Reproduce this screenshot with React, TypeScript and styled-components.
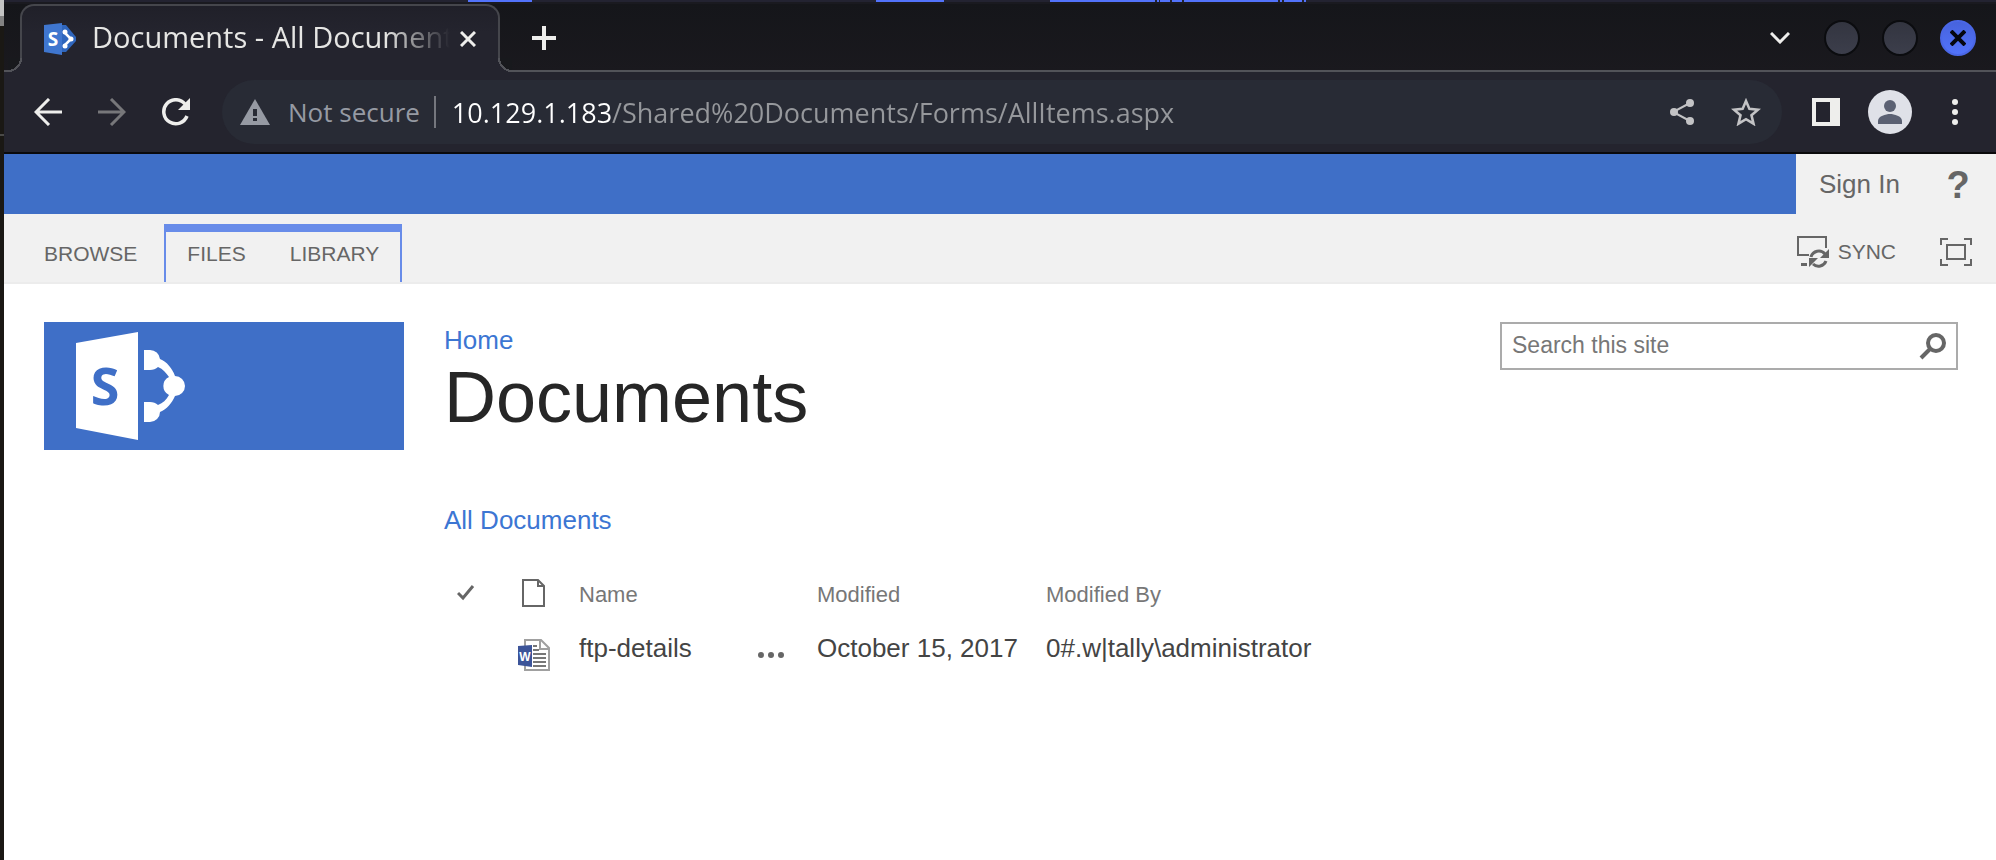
import React from 'react';
import styled, { createGlobalStyle, css } from 'styled-components';

const ui = '"Open Sans", "Noto Sans", sans-serif';
const body = '"Liberation Sans", Arial, sans-serif';

const c = {
  desktop: '#1a1814',
  strip: '#18191d',
  toolbar: '#24242e',
  field: '#282b35',
  line: '#525359',
  tabLine: '#45464c',
  icon: '#eeeeec',
  blue: '#3f6fc7',
  tabBlue: '#688ce9',
  ribbon: '#f1f1f1',
  grey: '#666666',
  link: '#3c76d3',
};

const GlobalStyle = createGlobalStyle`
  *, *::before, *::after { box-sizing: border-box; }
  html, body { margin: 0; background: #fff; }
  body { font-family: ${body}; font-size: 26px; }
  svg { display: block; flex: none; }
  button, input { font: inherit; color: inherit; border: 0; padding: 0; margin: 0; background: none; }
  button { cursor: pointer; }
  a { color: inherit; text-decoration: none; }
  h1, p { margin: 0; font-weight: 400; }
`;

const Desktop = styled.div`
  display: flex;
  min-height: 100vh;
  background: ${c.desktop};
`;

const DesktopEdge = styled.div`
  flex: none;
  width: 4px;
  background: linear-gradient(
    #c4c4c4 16px, #828282 16px 26px, ${c.desktop} 26px 134px, #4a4a48 134px 136px, ${c.desktop} 136px
  );
`;

const Window = styled.div`
  flex: 1;
  min-width: 0;
  display: flex;
  flex-direction: column;
  background: #fff;
`;

const Panel = styled.div`
  height: 4px;
  background: linear-gradient(#232331 2px, #1a1a20 2px);
`;

const TabStrip = styled.div`
  display: flex;
  align-items: center;
  height: 68px;
  padding-left: 16px;
  padding-right: 20px;
  background: linear-gradient(${c.line}, ${c.line}) bottom / 100% 2px no-repeat,
    linear-gradient(#15161a, #1a191e);
  font-family: ${ui};
`;

const Tab = styled.div`
  position: relative;
  display: flex;
  align-items: center;
  flex: none;
  width: 480px;
  height: 68px;
  padding: 0 12px 0 22px;
  border: 2px solid ${c.tabLine};
  border-bottom: 0;
  border-radius: 14px 14px 0 0;
  background: linear-gradient(#202029, ${c.toolbar} 40%);

  &::before,
  &::after {
    content: '';
    position: absolute;
    bottom: 0;
    width: 14px;
    height: 14px;
  }
  &::before {
    left: -14px;
    background: radial-gradient(circle at 0 0, ${c.strip} 12px, ${c.line} 12px 14px, ${c.toolbar} 14px);
  }
  &::after {
    right: -14px;
    background: radial-gradient(circle at 100% 0, ${c.strip} 12px, ${c.line} 12px 14px, ${c.toolbar} 14px);
  }
`;

const TabTitle = styled.span`
  flex: 1;
  min-width: 0;
  margin-left: 16px;
  padding-bottom: 4px;
  overflow: hidden;
  white-space: nowrap;
  font-size: 29px;
  line-height: 40px;
  color: #e6e6e4;
  mask-image: linear-gradient(to right, #000 82%, transparent);
`;

const IconButton = styled.button<{ $size?: number; $color?: string }>`
  display: flex;
  align-items: center;
  justify-content: center;
  flex: none;
  width: ${(p) => p.$size ?? 36}px;
  height: ${(p) => p.$size ?? 36}px;
  color: ${(p) => p.$color ?? c.icon};
`;

const NewTab = styled(IconButton)`
  margin-left: 26px;
`;

const WindowButtons = styled.div`
  display: flex;
  align-items: center;
  gap: 22px;
  margin-left: auto;
`;

const Round = styled.button<{ $close?: boolean }>`
  display: flex;
  align-items: center;
  justify-content: center;
  width: 36px;
  height: 36px;
  border: 2px solid #0b0c0f;
  border-radius: 50%;
  background: linear-gradient(#333540, #3c3e4b);
  ${(p) =>
    p.$close &&
    css`
      border-color: #4a67e6;
      background: linear-gradient(#4763dd, #5273fb);
      color: #05070f;
    `}
`;

const Toolbar = styled.div`
  display: flex;
  align-items: center;
  height: 82px;
  padding: 0 22px;
  border-bottom: 2px solid #0a0a0c;
  background: ${c.toolbar};
  font-family: ${ui};
`;

const NavButtons = styled.div`
  display: flex;
  gap: 20px;
  margin-right: 24px;
`;

const AddressBar = styled.div`
  display: flex;
  align-items: center;
  flex: 1;
  min-width: 0;
  height: 64px;
  padding: 0 18px;
  border-radius: 32px;
  background: ${c.field};
  font-size: 26px;
`;

const Security = styled.button`
  display: flex;
  align-items: center;
  gap: 18px;
  flex: none;
  height: 32px;
  padding-right: 14px;
  border-right: 2px solid #75777e;
  color: #969aa3;
`;

const Address = styled.input`
  flex: 1;
  min-width: 0;
  height: 40px;
  margin: 0 16px;
  outline: 0;
  font-size: 27px;
  color: transparent;
  caret-color: #fff;
  background: linear-gradient(to right, #fff 160px, #96989c 160px);
  background-clip: text;
`;

const FieldActions = styled.div`
  display: flex;
  gap: 28px;
`;

const ToolbarActions = styled.div`
  display: flex;
  align-items: center;
  gap: 24px;
  margin-left: 26px;
`;

const SuiteBar = styled.div`
  display: flex;
  height: 60px;
  background: ${c.blue};
`;

const SuiteLinks = styled.div`
  display: flex;
  align-items: center;
  justify-content: space-between;
  width: 200px;
  margin-left: auto;
  padding: 0 24px 0 23px;
  background: ${c.ribbon};
  color: ${c.grey};
`;

const Ribbon = styled.div`
  display: flex;
  align-items: flex-end;
  justify-content: space-between;
  height: 70px;
  padding: 0 24px 0 40px;
  border-bottom: 2px solid #ececec;
  background: ${c.ribbon};
  color: ${c.grey};
  font-size: 21px;
`;

const RibbonTabs = styled.nav`
  display: flex;
  align-items: flex-end;
  gap: 27px;
`;

const RibbonTab = styled.button`
  height: 50px;
  padding-bottom: 6px;
`;

const ContextTabs = styled.div`
  display: flex;
  gap: 44px;
  padding: 0 21px;
  border: solid ${c.tabBlue};
  border-width: 8px 2px 0;
`;

const RibbonTools = styled.div`
  display: flex;
  align-items: center;
  gap: 44px;
  height: 60px;
`;

const SyncButton = styled.button`
  display: flex;
  align-items: center;
  gap: 8px;
`;

const Page = styled.div`
  display: flex;
  gap: 40px;
  padding: 38px 38px 38px 40px;
`;

const SiteLogo = styled.a`
  flex: none;
  width: 360px;
  height: 128px;
  padding: 10px 0 0 32px;
  background: ${c.blue};
`;

const Main = styled.main`
  flex: 1;
  min-width: 0;
`;

const PageHead = styled.header`
  display: flex;
  justify-content: space-between;
  align-items: flex-start;
  margin-bottom: 66px;
`;

const TextLink = styled.a`
  display: block;
  width: fit-content;
  line-height: 36px;
  color: ${c.link};
`;

const Title = styled.h1`
  font-size: 72px;
  line-height: 78px;
  color: #262626;
`;

const SearchBox = styled.form`
  display: flex;
  align-items: center;
  width: 458px;
  height: 48px;
  padding: 0 9px 0 10px;
  border: 2px solid #ababab;
  color: ${c.grey};
`;

const SearchInput = styled.input`
  flex: 1;
  min-width: 0;
  height: 40px;
  padding-bottom: 2px;
  outline: 0;
  font-size: 23px;

  &::placeholder {
    color: #777;
    opacity: 1;
  }
`;

const List = styled.table`
  margin-top: 32px;
  border-collapse: collapse;
  table-layout: fixed;
  width: 900px;
  text-align: left;
  white-space: nowrap;
  color: #444;
`;

const Head = styled.th`
  height: 50px;
  padding: 0;
  font-size: 22px;
  font-weight: 400;
  color: #777;
`;

const Cell = styled.td`
  height: 56px;
  padding: 0;
`;

const Favicon = () => (
  <svg width="32" height="32" viewBox="0 0 32 32" aria-hidden="true">
    <path d="M18 2h4l10 12v4L22 29h-4z" fill="#2f66bd" />
    <path d="M20 9l7 7-7 7" fill="none" stroke="#fff" strokeWidth="2.500" />
    <circle cx="21" cy="9" r="2.500" fill="#fff" />
    <circle cx="27" cy="16" r="2.500" fill="#fff" />
    <circle cx="21" cy="23" r="2.500" fill="#fff" />
    <path d="M0 2L18 0v32L0 29z" fill="#3f76cf" />
    <text x="9" y="23" textAnchor="middle" fontFamily="Open Sans" fontWeight="700" fontSize="19" fill="#fff">S</text>
  </svg>
);

const SharePointLogo = () => (
  <svg width="112" height="108" viewBox="0 0 112 108" role="img" aria-label="SharePoint">
    <path d="M0 11L62 0v108L0 96z" fill="#fff" />
    <text x="29" y="73" textAnchor="middle" fontFamily="Open Sans" fontWeight="700" fontSize="52" fill={c.blue}>S</text>
    <path d="M68 18h6a10 10 0 0 1 10 9c7 3 12 9 15 17a10 10 0 0 1 0 20c-3 7-8 13-15 16a10 10 0 0 1-10 10h-6V70h6c3 0 6 1 8 3 5-2 8-5 11-10a10 10 0 0 1 0-18c-3-4-6-8-11-10-2 2-5 3-8 3h-6z" fill="#fff" />
  </svg>
);

const Back = () => (
  <svg width="28" height="28" viewBox="0 0 28 28" fill="none" stroke="currentColor" strokeWidth="3">
    <path d="M28 14H3M15 1L2 14l13 13" />
  </svg>
);

const Forward = () => (
  <svg width="28" height="28" viewBox="0 0 28 28" fill="none" stroke="currentColor" strokeWidth="3">
    <path d="M0 14h25M13 1l13 13-13 13" />
  </svg>
);

const Reload = () => (
  <svg width="28" height="28" viewBox="0 0 28 28" fill="none" stroke="currentColor" strokeWidth="3.500">
    <path d="M25 18A12 12 0 1 1 23 6" />
    <path d="M28 0v12H16z" fill="currentColor" stroke="none" />
  </svg>
);

const Warning = () => (
  <svg width="30" height="26" viewBox="0 0 30 26">
    <path d="M15 0l15 26H0z" fill="currentColor" />
    <path d="M13 10h4v7h-4zM13 19h4v3h-4z" fill={c.field} />
  </svg>
);

const Share = () => (
  <svg width="26" height="28" viewBox="0 0 26 28">
    <path d="M21 5L4 14l17 9" fill="none" stroke="currentColor" strokeWidth="2" />
    <g fill="currentColor">
      <circle cx="21" cy="5" r="4" />
      <circle cx="5" cy="14" r="4" />
      <circle cx="21" cy="23" r="4" />
    </g>
  </svg>
);

const Star = () => (
  <svg width="30" height="28" viewBox="0 0 30 28" fill="none" stroke="currentColor" strokeWidth="2.6">
    <path d="M15 3l3.400 7.900 8.600.8-6.500 5.600 2 8.400-7.500-4.500-7.500 4.500 2-8.400L3 11.700l8.600-.8z" />
  </svg>
);

const SidePanel = () => (
  <svg width="28" height="28" viewBox="0 0 28 28">
    <path d="M0 0h28v28H0zM4 4v20h14V4z" fillRule="evenodd" fill="currentColor" />
  </svg>
);

const Avatar = () => (
  <svg width="44" height="44" viewBox="0 0 44 44">
    <circle cx="22" cy="22" r="22" fill="#dfe1e8" />
    <circle cx="22" cy="16" r="6" fill="#5b6173" />
    <path d="M10 34v-3c0-5 8-7 12-7s12 2 12 7v3z" fill="#5b6173" />
  </svg>
);

const Kebab = () => (
  <svg width="6" height="26" viewBox="0 0 6 26" fill="currentColor">
    <circle cx="3" cy="3" r="3" />
    <circle cx="3" cy="13" r="3" />
    <circle cx="3" cy="23" r="3" />
  </svg>
);

const Cross = ({ size, weight }: { size: number; weight: number }) => (
  <svg width={size} height={size} viewBox="0 0 16 16" fill="none" stroke="currentColor" strokeWidth={weight}>
    <path d="M1 1l14 14M15 1L1 15" />
  </svg>
);

const Plus = () => (
  <svg width="24" height="24" viewBox="0 0 24 24" fill="none" stroke="currentColor" strokeWidth="4">
    <path d="M12 0v24M0 12h24" />
  </svg>
);

const Chevron = () => (
  <svg width="20" height="12" viewBox="0 0 20 12" fill="none" stroke="currentColor" strokeWidth="3">
    <path d="M1 1l9 9 9-9" />
  </svg>
);

const Help = styled.button`
  width: 28px;
  padding-top: 2px;
  font-size: 38px;
  line-height: 48px;
  font-weight: 700;
`;

const Sync = () => (
  <svg width="33" height="33" viewBox="0 0 33 33" fill="none" stroke="currentColor" strokeWidth="2">
    <path d="M29 12V1H1v18h11" />
    <path d="M4 30v-3h6v3z" fill="currentColor" stroke="none" />
    <path d="M14 21a8 8 0 0 1 14-3M29 25a8 8 0 0 1-13 3" strokeWidth="3" />
    <path d="M32 13v9h-9zM12 31v-9h9z" fill="currentColor" stroke="none" />
  </svg>
);

const Focus = () => (
  <svg width="32" height="28" viewBox="0 0 32 28" fill="none" stroke="currentColor" strokeWidth="2">
    <path d="M1 7V1h7M24 1h7v6M31 21v6h-7M8 27H1v-6M7 7h18v14H7z" />
  </svg>
);

const Magnifier = () => (
  <svg width="28" height="28" viewBox="0 0 28 28" fill="none" stroke="currentColor" strokeWidth="4">
    <circle cx="17" cy="11" r="8" />
    <path d="M11 17l-9 9" />
  </svg>
);

const Check = () => (
  <svg width="18" height="16" viewBox="0 0 18 16" fill="none" stroke="currentColor" strokeWidth="3">
    <path d="M1 8l5 5L16 1" />
  </svg>
);

const Sheet = () => (
  <svg width="24" height="28" viewBox="0 0 24 28" fill="none" stroke="currentColor" strokeWidth="2">
    <path d="M1 1h15l6 6v20H1zM16 1v6h6" />
  </svg>
);

const WordFile = () => (
  <svg width="32" height="32" viewBox="0 0 32 32">
    <path d="M7 1h16l8 8v22H7z" fill="#fff" stroke="#a0a0a0" strokeWidth="2" />
    <path d="M22 1v9h9" fill="none" stroke="#a0a0a0" strokeWidth="2" />
    <path d="M15 7h4M15 11h6M15 15h13M15 19h13M15 23h13M15 27h13" stroke="#777" strokeWidth="2" />
    <path d="M0 7l14-1v22L0 26z" fill="#3c5499" />
    <text x="7" y="22" textAnchor="middle" fontFamily="Liberation Sans" fontWeight="700" fontSize="12" fill="#fff">W</text>
  </svg>
);

const Dots = () => (
  <svg width="26" height="6" viewBox="0 0 26 6" fill="currentColor">
    <circle cx="3" cy="3" r="3" />
    <circle cx="13" cy="3" r="3" />
    <circle cx="23" cy="3" r="3" />
  </svg>
);

const IconSlot = styled.span<{ $x?: number; $top?: number; $bottom?: number }>`
  display: block;
  padding: ${(p) => p.$top ?? 0}px 0 ${(p) => p.$bottom ?? 0}px ${(p) => p.$x ?? 0}px;
  color: ${c.grey};
`;

const documents = [
  { name: 'ftp-details', modified: 'October 15, 2017', by: '0#.w|tally\\administrator' },
];

export default function App() {
  return (
    <Desktop>
      <GlobalStyle />
      <DesktopEdge />
      <Window>
        <Panel>
          <svg width="1400" height="2" aria-hidden="true" fill="#5273fb">
            <path d="M464 0h64v2h-64zM872 0h68v2h-68zM1046 0h105v2h-105zM1153 0h2v2h-2zM1156 0h10v2h-10zM1168 0h10v2h-10zM1180 0h94v2h-94zM1276 0h2v2h-2zM1280 0h18v2h-18zM1300 0h2v2h-2z" />
          </svg>
        </Panel>
        <TabStrip>
          <Tab>
            <Favicon />
            <TabTitle>Documents - All Documents</TabTitle>
            <IconButton aria-label="Close tab"><Cross size={16} weight={3} /></IconButton>
          </Tab>
          <NewTab aria-label="New tab"><Plus /></NewTab>
          <WindowButtons>
            <IconButton $size={44} aria-label="Search tabs"><Chevron /></IconButton>
            <Round aria-label="Minimize" />
            <Round aria-label="Maximize" />
            <Round $close aria-label="Close window"><Cross size={16} weight={4} /></Round>
          </WindowButtons>
        </TabStrip>
        <Toolbar>
          <NavButtons>
            <IconButton $size={44} aria-label="Back"><Back /></IconButton>
            <IconButton $size={44} $color="#77777a" aria-label="Forward"><Forward /></IconButton>
            <IconButton $size={44} aria-label="Reload"><Reload /></IconButton>
          </NavButtons>
          <AddressBar>
            <Security><Warning />Not secure</Security>
            <Address aria-label="Address" defaultValue="10.129.1.183/Shared%20Documents/Forms/AllItems.aspx" />
            <FieldActions>
              <IconButton $color="#c3c3c5" aria-label="Share"><Share /></IconButton>
              <IconButton $color="#c3c3c5" aria-label="Bookmark"><Star /></IconButton>
            </FieldActions>
          </AddressBar>
          <ToolbarActions>
            <IconButton aria-label="Side panel"><SidePanel /></IconButton>
            <IconButton $size={44} aria-label="Profile"><Avatar /></IconButton>
            <IconButton $size={38} aria-label="Menu"><Kebab /></IconButton>
          </ToolbarActions>
        </Toolbar>
        <SuiteBar>
          <SuiteLinks>
            <a href="#signin">Sign In</a>
            <Help>?</Help>
          </SuiteLinks>
        </SuiteBar>
        <Ribbon>
          <RibbonTabs>
            <RibbonTab>BROWSE</RibbonTab>
            <ContextTabs>
              <RibbonTab>FILES</RibbonTab>
              <RibbonTab>LIBRARY</RibbonTab>
            </ContextTabs>
          </RibbonTabs>
          <RibbonTools>
            <SyncButton><Sync />SYNC</SyncButton>
            <button aria-label="Focus on content"><Focus /></button>
          </RibbonTools>
        </Ribbon>
        <Page>
          <SiteLogo href="#home"><SharePointLogo /></SiteLogo>
          <Main>
            <PageHead>
              <div>
                <TextLink href="#home">Home</TextLink>
                <Title>Documents</Title>
              </div>
              <SearchBox role="search">
                <SearchInput type="text" aria-label="Search this site" placeholder="Search this site" />
                <button type="button" aria-label="Search"><Magnifier /></button>
              </SearchBox>
            </PageHead>
            <TextLink href="#all">All Documents</TextLink>
            <List>
              <colgroup>
                <col width="74" />
                <col width="61" />
                <col width="179" />
                <col width="59" />
                <col width="229" />
                <col />
              </colgroup>
              <thead>
                <tr>
                  <Head scope="col"><IconSlot $x={13} $bottom={4}><Check /></IconSlot></Head>
                  <Head scope="col"><IconSlot $x={4} $bottom={4}><Sheet /></IconSlot></Head>
                  <Head scope="col" colSpan={2}>Name</Head>
                  <Head scope="col">Modified</Head>
                  <Head scope="col">Modified By</Head>
                </tr>
              </thead>
              <tbody>
                {documents.map((d) => (
                  <tr key={d.name}>
                    <Cell />
                    <Cell><IconSlot $top={14}><WordFile /></IconSlot></Cell>
                    <Cell><a href="#file">{d.name}</a></Cell>
                    <Cell>
                      <button aria-label="Open menu"><IconSlot $top={20}><Dots /></IconSlot></button>
                    </Cell>
                    <Cell>{d.modified}</Cell>
                    <Cell>{d.by}</Cell>
                  </tr>
                ))}
              </tbody>
            </List>
          </Main>
        </Page>
      </Window>
    </Desktop>
  );
}
